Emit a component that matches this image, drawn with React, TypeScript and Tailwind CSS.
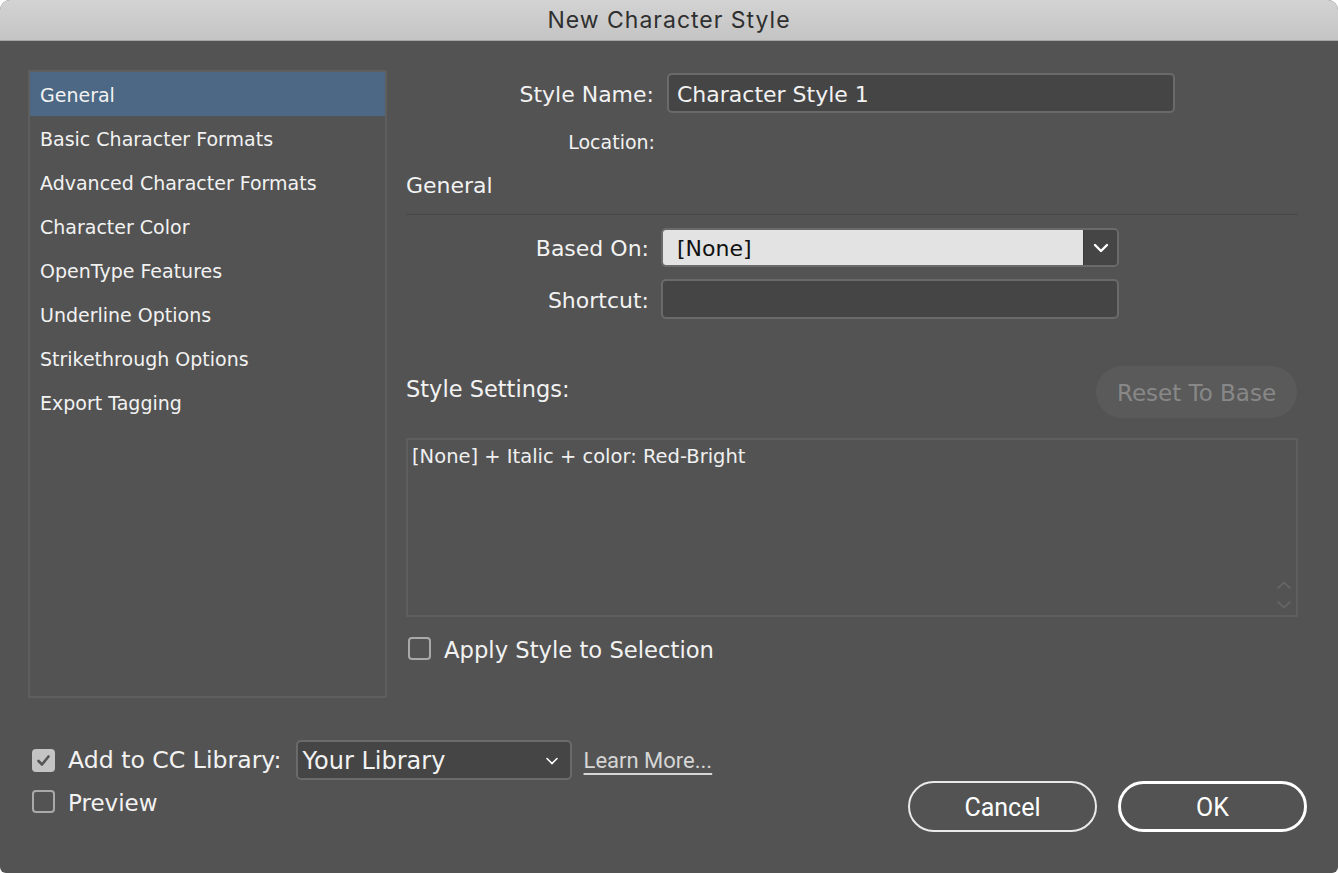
import React from "react";

function Checkbox({ checked = false }: { checked?: boolean }) {
  if (checked) {
    return (
      <div className="w-[23px] h-[23px] rounded-[4px] bg-[#c4c4c4] flex items-center justify-center shrink-0">
        <svg width="15" height="13" viewBox="0 0 15 13" fill="none">
          <path d="M2.5 7 L6 10.5 L12.5 2.5" stroke="#555555" strokeWidth="2.6" strokeLinecap="round" strokeLinejoin="round" />
        </svg>
      </div>
    );
  }
  return <div className="w-[23px] h-[23px] rounded-[4px] border-2 border-[#a9a9a9] shrink-0" />;
}

const sidebarItems = [
  "General",
  "Basic Character Formats",
  "Advanced Character Formats",
  "Character Color",
  "OpenType Features",
  "Underline Options",
  "Strikethrough Options",
  "Export Tagging",
];

export default function App() {
  return (
    <div className="w-[1338px] h-[873px] bg-white font-['DejaVu_Sans',sans-serif]">
      <div className="w-full h-full rounded-t-[10px] rounded-b-[6px] overflow-hidden flex flex-col bg-[#535353]">
        {/* Title bar */}
        <div className="h-[41px] shrink-0 bg-gradient-to-b from-[#d3d3d3] to-[#c4c4c4] border-b border-[#a5a5a5] flex items-center justify-center">
          <span className="font-['Inter',sans-serif] text-[23px] text-[#2f2f2f] tracking-[1px] leading-none">
            New Character Style
          </span>
        </div>

        {/* Main */}
        <div className="flex pt-[29px] pl-[28px]">
          {/* Sidebar */}
          <div className="w-[359px] h-[628px] border-2 border-[#5e5e5e] shrink-0">
            {sidebarItems.map((item, i) => (
              <div
                key={item}
                className={`h-[44px] pl-[10px] pt-[2px] flex items-center text-[19px] text-[#f2f2f2] ${
                  i === 0 ? "bg-[#4c6884]" : ""
                }`}
              >
                {item}
              </div>
            ))}
          </div>

          {/* Right column */}
          <div className="ml-[19px] w-[892px] flex flex-col text-[#f2f2f2]">
            <div className="mt-[3px] h-[40px] flex items-center">
              <div className="w-[248px] pt-[4px] text-right text-[22px] leading-none">Style Name:</div>
              <div className="ml-[13px] w-[508px] h-[40px] bg-[#454545] border-2 border-[#6a6a6a] rounded-[5px] flex items-center pl-[8px] pt-[3px] text-[22px]">
                Character Style 1
              </div>
            </div>

            <div className="mt-[18px] h-[22px] flex items-center">
              <div className="w-[249px] text-right text-[19px] leading-[22px]">Location:</div>
            </div>

            <div className="mt-[19px] h-[26px] text-[22px] leading-[26px] pt-px">General</div>

            <div className="mt-[16px] h-px bg-[#474747]" />

            <div className="mt-[13px] h-[39px] flex items-center">
              <div className="w-[243px] pt-[2px] text-right text-[22px] leading-none">Based On:</div>
              <div className="ml-[12px] w-[458px] h-[39px] border-2 border-[#6a6a6a] rounded-[5px] flex overflow-hidden">
                <div className="flex-1 bg-[#e3e3e3] text-[#111111] text-[22px] flex items-center pl-[14px] pt-[2px]">[None]</div>
                <div className="w-[34px] bg-[#454545] border-l border-[#3a3a3a] flex items-center justify-center">
                  <svg width="16" height="10" viewBox="0 0 16 10" fill="none">
                    <path d="M2 2 L8 8 L14 2" stroke="#ffffff" strokeWidth="2.4" strokeLinecap="round" strokeLinejoin="round" />
                  </svg>
                </div>
              </div>
            </div>

            <div className="mt-[12px] h-[40px] flex items-center">
              <div className="w-[243px] pt-[3px] text-right text-[22px] leading-none">Shortcut:</div>
              <div className="ml-[12px] w-[458px] h-[40px] bg-[#454545] border-2 border-[#6a6a6a] rounded-[5px]" />
            </div>

            <div className="mt-[47px] h-[52px] flex justify-between items-start">
              <div className="pt-[10px] text-[22.5px] leading-[26px]">Style Settings:</div>
              <div className="mr-px w-[201px] h-[52px] rounded-full bg-[#5a5a5a] flex items-center justify-center pt-[2px] text-[23px] text-[#888888]">
                Reset To Base
              </div>
            </div>

            <div className="mt-[20px] h-[179px] border-2 border-[#5e5e5e] flex">
              <div className="flex-1 pl-[4px] pt-[5px] text-[19.5px] leading-[24px] text-[#f0f0f0]">
                [None] + Italic + color: Red-Bright
              </div>
              <div className="w-[24px] flex flex-col justify-end items-center pb-[6px] gap-[10px]">
                <svg width="16" height="9" viewBox="0 0 16 9" fill="none">
                  <path d="M1.5 7.5 L8 1.5 L14.5 7.5" stroke="#646464" strokeWidth="2" />
                </svg>
                <svg width="16" height="9" viewBox="0 0 16 9" fill="none">
                  <path d="M1.5 1.5 L8 7.5 L14.5 1.5" stroke="#646464" strokeWidth="2" />
                </svg>
              </div>
            </div>

            <div className="mt-[20px] h-[23px] flex items-center ml-[2px]">
              <Checkbox />
              <span className="ml-[13px] pt-[3px] text-[22.7px] leading-none">Apply Style to Selection</span>
            </div>
          </div>
        </div>

        {/* Bottom */}
        <div className="mt-[42px] pl-[32px] pr-[31px] flex justify-between text-[#f2f2f2]">
          <div className="flex flex-col">
            <div className="h-[40px] flex items-center">
              <Checkbox checked />
              <span className="ml-[13px] pt-[2px] text-[23.6px] leading-none">Add to CC Library:</span>
              <div className="ml-[14px] w-[276px] h-[40px] bg-[#454545] border-2 border-[#6a6a6a] rounded-[5px] flex items-center justify-between pl-[5px] pr-[12px] pt-[2px] text-[24px]">
                <span>Your Library</span>
                <svg width="12" height="8" viewBox="0 0 12 8" fill="none">
                  <path d="M1 1.5 L6 6.5 L11 1.5" stroke="#ffffff" strokeWidth="1.6" strokeLinecap="round" />
                </svg>
              </div>
              <span className="ml-[12px] pt-[2px] font-['Roboto',sans-serif] text-[22px] text-[#d6d6d6] underline decoration-2 underline-offset-[5px] leading-none">
                Learn More...
              </span>
            </div>
            <div className="mt-[10px] h-[23px] flex items-center">
              <Checkbox />
              <span className="ml-[13px] pt-[3px] text-[23px] leading-none">Preview</span>
            </div>
          </div>

          <div className="mt-[41px] flex gap-[21px]">
            <div className="w-[189px] h-[51px] rounded-full border-2 border-[#eaeaea] flex items-center justify-center pt-[2px] font-['Roboto',sans-serif] text-[25px] text-white">
              Cancel
            </div>
            <div className="w-[189px] h-[51px] rounded-full border-[3px] border-white flex items-center justify-center pt-[2px] font-['Roboto',sans-serif] text-[25px] text-white">
              OK
            </div>
          </div>
        </div>
      </div>
    </div>
  );
}
